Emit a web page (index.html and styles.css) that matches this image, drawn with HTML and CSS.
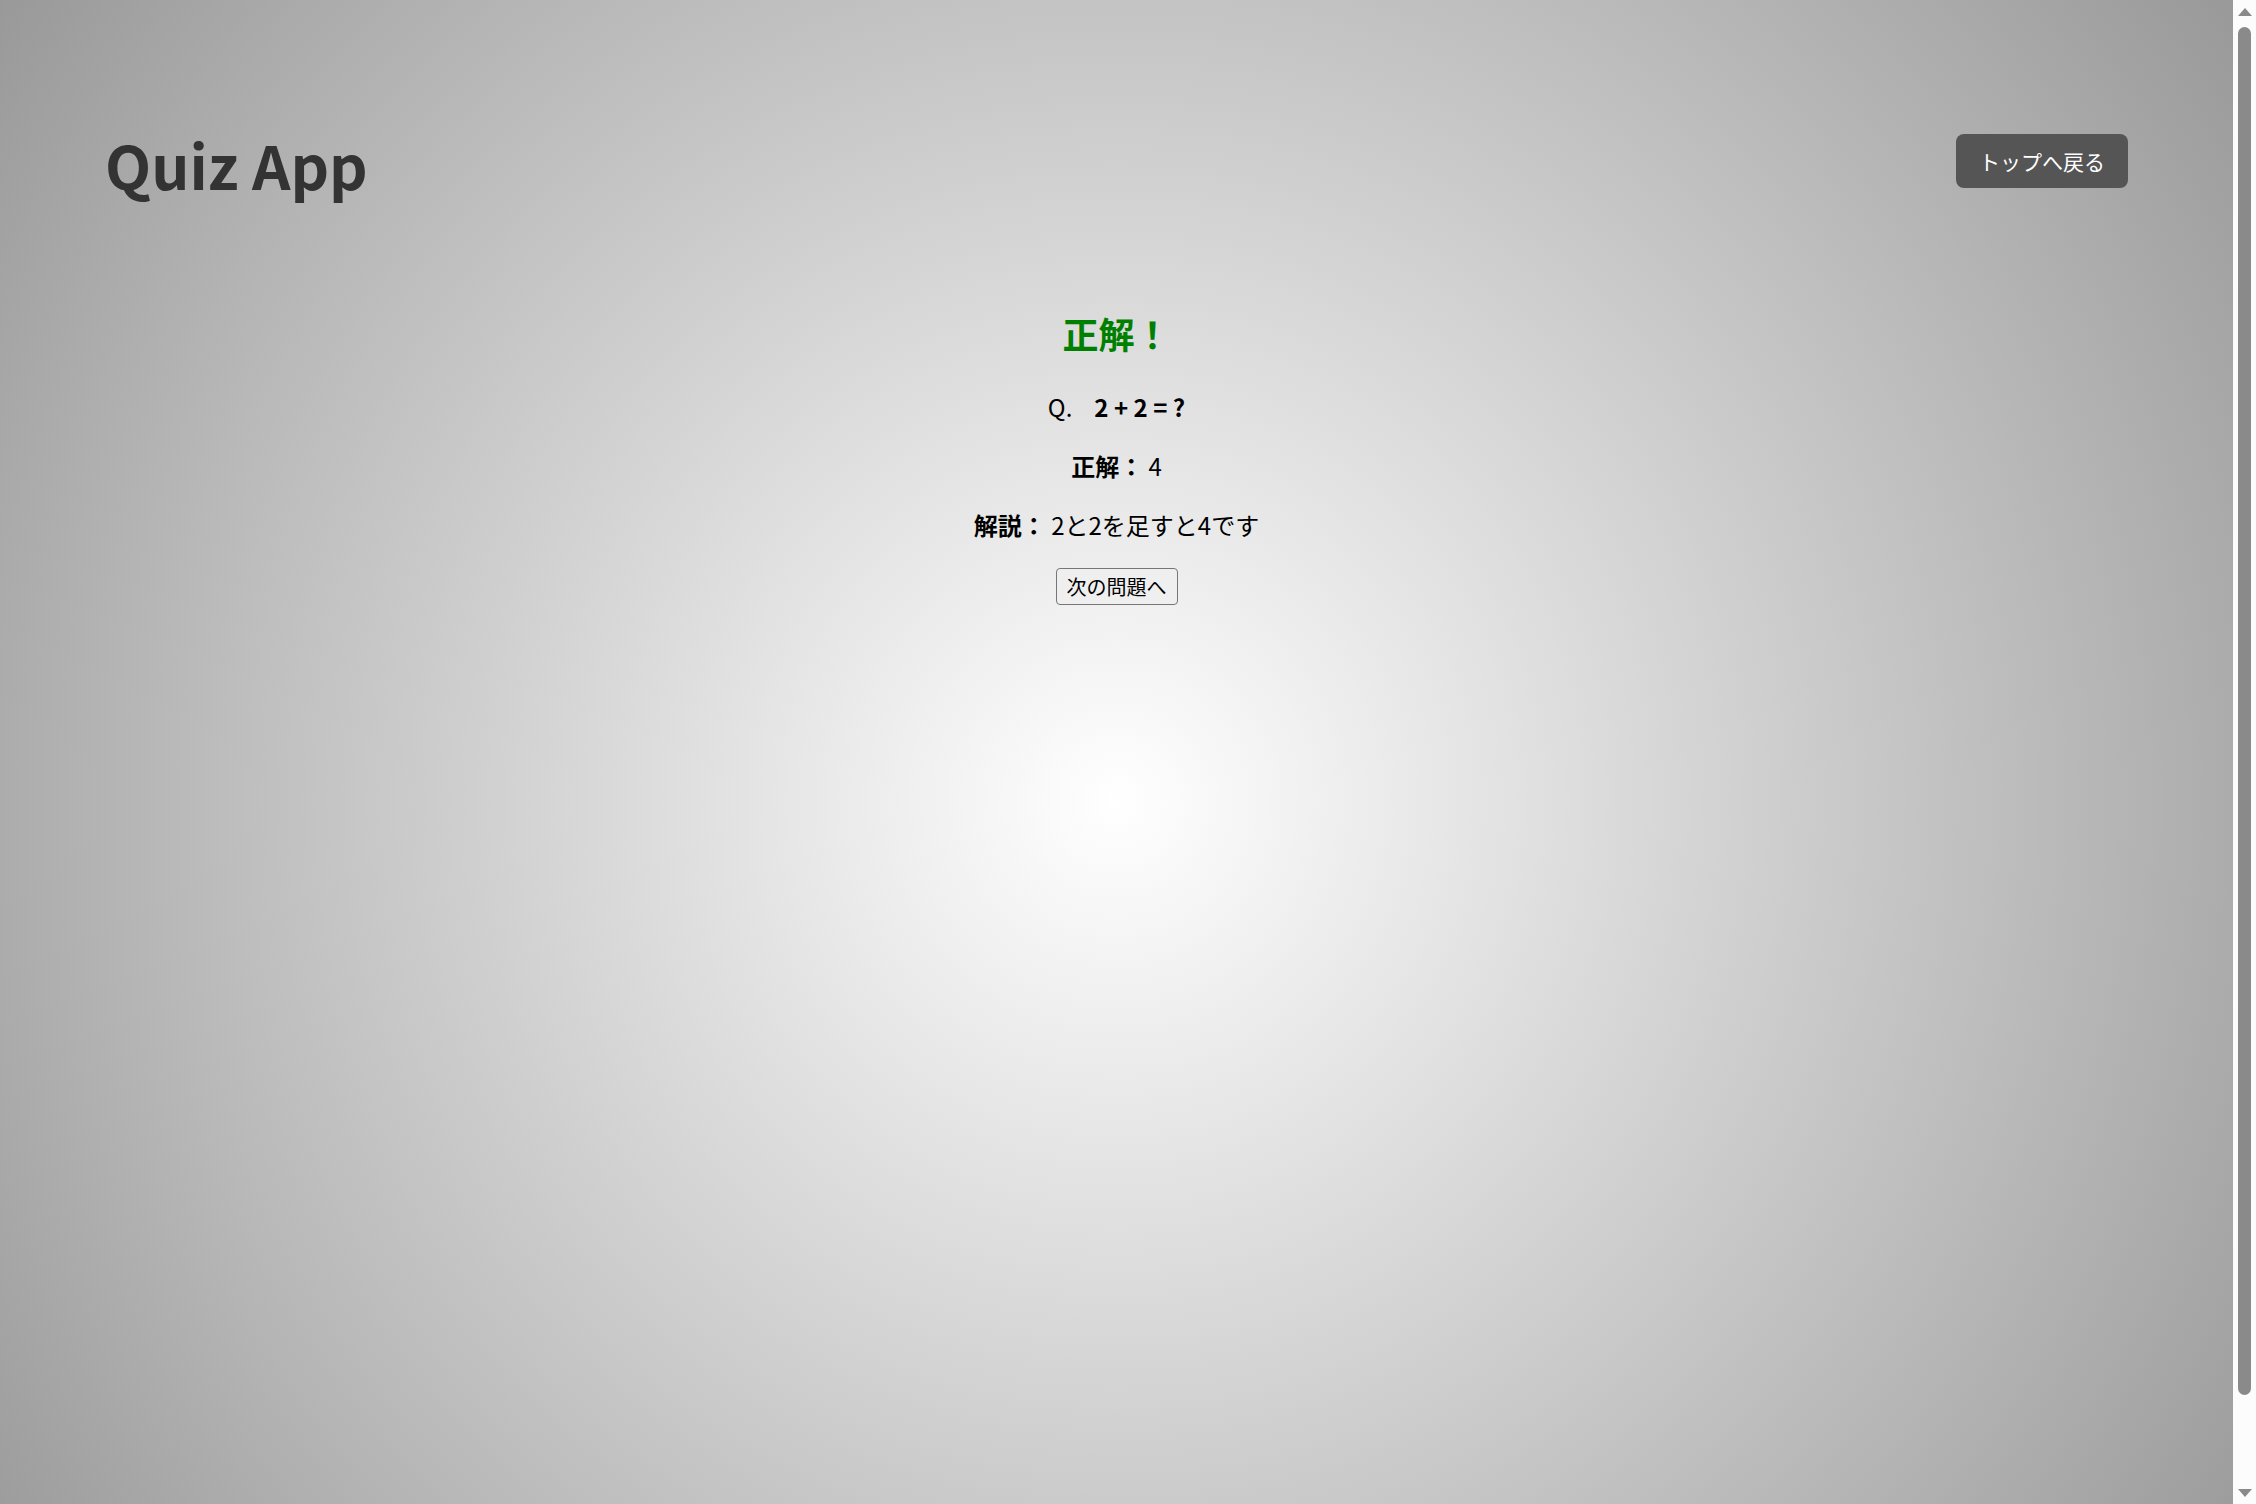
FILE: index.html
```html
<!DOCTYPE html>
<html lang="ja">
<head>
<meta charset="utf-8">
<title>Quiz App</title>
<link rel="stylesheet" href="styles.css">
</head>
<body>
<div class="page">
  <header class="site-header">
    <h1 class="logo">Quiz App</h1>
    <button class="back-btn" type="button">トップへ戻る</button>
  </header>
  <main class="result">
    <h2 class="result-title">正解！</h2>
    <p class="question"><span class="q-label">Q.</span><strong>2 + 2 = ?</strong></p>
    <p class="line"><strong>正解：</strong> 4</p>
    <p class="line"><strong>解説：</strong> 2と2を足すと4です</p>
    <div class="actions"><button class="next-btn" type="button">次の問題へ</button></div>
  </main>
</div>
<div class="scrollbar" aria-hidden="true">
  <div class="sb-arrow-up"></div>
  <div class="sb-thumb"></div>
  <div class="sb-arrow-down"></div>
</div>
</body>
</html>
```

FILE: styles.css
```css
html {
  margin: 0;
  overflow: hidden;
}

body {
  margin: 0;
  display: flex;
  align-items: flex-start;
  font-family: "Noto Sans CJK JP", "Noto Sans", sans-serif;
  color: #000;
}

.page {
  flex: 1;
  min-width: 0;
  min-height: 1603px;
  background: radial-gradient(circle, #ffffff 0%, #999999 100%);
}

.site-header {
  display: flex;
  justify-content: space-between;
  align-items: flex-start;
  padding: 120px 105px 0;
}

.logo {
  margin: 0;
  font-size: 60px;
  font-weight: 700;
  line-height: normal;
  color: #333;
}

.back-btn {
  margin-top: 14px;
  padding: 12px 23px;
  border: none;
  border-radius: 8px;
  background: #555;
  color: #fff;
  font-family: inherit;
  font-size: 21px;
  line-height: normal;
  cursor: pointer;
}

.result {
  margin-top: 100px;
  text-align: center;
}

.result-title {
  margin: 0;
  font-size: 36px;
  font-weight: 700;
  line-height: normal;
  color: #008000;
}

.question,
.line {
  margin: 24px 0 0;
  font-size: 24px;
  line-height: normal;
}

.question {
  margin-top: 30px;
}

.q-label {
  margin-right: 22px;
}

.actions {
  margin-top: 25.5px;
  display: flex;
  justify-content: center;
}

.next-btn {
  padding: 3px 10px;
  border: 1px solid #767676;
  border-radius: 4px;
  background: #efefef;
  color: #000;
  font-family: inherit;
  font-size: 20px;
  line-height: normal;
}

/* imitation of the browser's vertical scrollbar */
.scrollbar {
  flex: none;
  width: 23px;
  height: 100vh;
  box-sizing: border-box;
  padding-top: 8px;
  background: #fcfcfc;
  display: flex;
  flex-direction: column;
  align-items: center;
}

.sb-arrow-up {
  width: 0;
  height: 0;
  border-left: 7.5px solid transparent;
  border-right: 7.5px solid transparent;
  border-bottom: 8px solid #8a8a8a;
}

.sb-thumb {
  margin-top: 11px;
  width: 13px;
  height: 1368px;
  border-radius: 7px;
  background: #8a8a8a;
}

.sb-arrow-down {
  margin-top: 94px;
  width: 0;
  height: 0;
  border-left: 7.5px solid transparent;
  border-right: 7.5px solid transparent;
  border-top: 8px solid #8a8a8a;
}
```
